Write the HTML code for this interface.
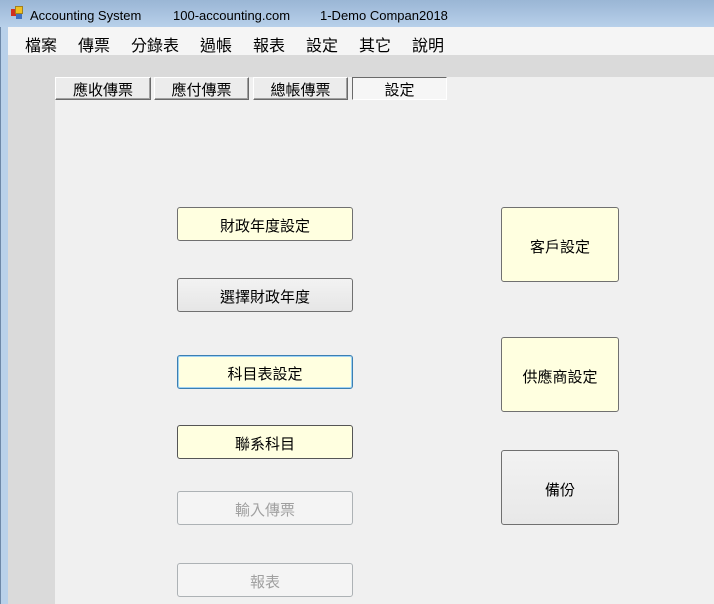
<!DOCTYPE html>
<html><head><meta charset="utf-8"><style>
body{margin:0;width:714px;height:604px;overflow:hidden;position:relative;background:#f0f0f0;font-family:"Liberation Sans","Noto Sans CJK TC",sans-serif;}
.a{position:absolute;box-sizing:border-box;}
.title{left:0;top:0;width:714px;height:27px;background:linear-gradient(#9ab6d5,#b8d0ea);}
.title span{position:absolute;top:8px;font-size:13px;color:#000;}
.menu{left:8px;top:27px;width:706px;height:28px;background:#f5f5f5;}
.menu span{position:absolute;top:5px;font-size:16px;}
.btn{display:flex;align-items:center;justify-content:center;border:1px solid #707070;border-radius:3px;font-size:15px;background:#ffffe0;padding-top:3px;}
.tab{display:flex;align-items:center;justify-content:center;border:1px solid #fff;border-right-color:#6a6a6a;border-bottom-color:#6a6a6a;background:#ececec;font-size:15px;box-shadow:inset -1px -1px 0 #a0a0a0;padding-top:2px;}
</style></head><body>
<div class="a title">
<div class="a" style="left:11px;top:9px;width:7px;height:7px;background:#d03020"></div>
<div class="a" style="left:15px;top:6px;width:8px;height:8px;background:#f0c020;border:1px solid #a08020"></div>
<div class="a" style="left:16px;top:14px;width:6px;height:5px;background:#4070c0"></div>
<span style="left:30px">Accounting System</span>
<span style="left:173px">100-accounting.com</span>
<span style="left:320px">1-Demo Compan2018</span>
</div>
<div class="a" style="left:0;top:27px;width:8px;height:577px;background:#b9d1ea;border-left:1px solid #6d88a8"></div>
<div class="a menu">
<span style="left:17px">檔案</span><span style="left:70px">傳票</span><span style="left:123px">分錄表</span><span style="left:192px">過帳</span><span style="left:245px">報表</span><span style="left:298px">設定</span><span style="left:351px">其它</span><span style="left:404px">說明</span>
</div>
<div class="a" style="left:8px;top:55px;width:706px;height:22px;background:#dadada"></div>
<div class="a" style="left:8px;top:77px;width:47px;height:527px;background:#dadada"></div>
<div class="a tab" style="left:55px;top:77px;width:96px;height:23px">應收傳票</div>
<div class="a tab" style="left:154px;top:77px;width:95px;height:23px">應付傳票</div>
<div class="a tab" style="left:253px;top:77px;width:95px;height:23px">總帳傳票</div>
<div class="a tab" style="left:352px;top:77px;width:95px;height:23px;border-color:#6a6a6a #fff #fff #6a6a6a;background:#f6f6f6;box-shadow:none">設定</div>
<div class="a btn" style="left:177px;top:207px;width:176px;height:34px">財政年度設定</div>
<div class="a btn" style="left:177px;top:278px;width:176px;height:34px;background:linear-gradient(#f2f2f2,#e6e6e6)">選擇財政年度</div>
<div class="a btn" style="left:177px;top:355px;width:176px;height:34px;border-color:#3c7fb1;box-shadow:inset 0 0 0 1px #9fd3f5">科目表設定</div>
<div class="a btn" style="left:177px;top:425px;width:176px;height:34px;border-color:#555">聯系科目</div>
<div class="a btn" style="left:177px;top:491px;width:176px;height:34px;background:#f4f4f4;border-color:#adb2b5;color:#a0a0a0">輸入傳票</div>
<div class="a btn" style="left:177px;top:563px;width:176px;height:34px;background:#f4f4f4;border-color:#adb2b5;color:#a0a0a0">報表</div>
<div class="a btn" style="left:501px;top:207px;width:118px;height:75px">客戶設定</div>
<div class="a btn" style="left:501px;top:337px;width:118px;height:75px">供應商設定</div>
<div class="a btn" style="left:501px;top:450px;width:118px;height:75px;background:linear-gradient(#f2f2f2,#e8e8e8)">備份</div>
</body></html>
